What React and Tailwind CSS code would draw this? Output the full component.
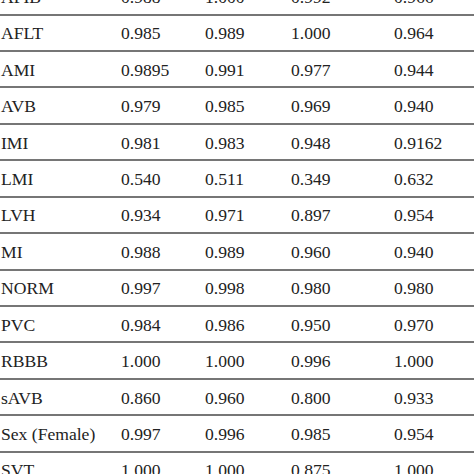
import React from "react";

const rows = [
  ["AFIB", "0.988", "1.000", "0.992", "0.966"],
  ["AFLT", "0.985", "0.989", "1.000", "0.964"],
  ["AMI", "0.9895", "0.991", "0.977", "0.944"],
  ["AVB", "0.979", "0.985", "0.969", "0.940"],
  ["IMI", "0.981", "0.983", "0.948", "0.9162"],
  ["LMI", "0.540", "0.511", "0.349", "0.632"],
  ["LVH", "0.934", "0.971", "0.897", "0.954"],
  ["MI", "0.988", "0.989", "0.960", "0.940"],
  ["NORM", "0.997", "0.998", "0.980", "0.980"],
  ["PVC", "0.984", "0.986", "0.950", "0.970"],
  ["RBBB", "1.000", "1.000", "0.996", "1.000"],
  ["sAVB", "0.860", "0.960", "0.800", "0.933"],
  ["Sex (Female)", "0.997", "0.996", "0.985", "0.954"],
  ["SVT", "1.000", "1.000", "0.875", "1.000"],
];

export default function App() {
  return (
    <div
      className="w-[474px] h-[474px] overflow-hidden bg-white text-[#222]"
      style={{ fontFamily: '"Liberation Serif", "Times New Roman", serif' }}
    >
      <div className="mt-[-20.95px]">
        {rows.map((r, i) => (
          <div
            key={i}
            className="grid grid-cols-[121px_84px_86px_103px_1fr] items-center h-[36.45px] border-b-2 border-[#767676] pt-[2px] text-[17.6px] leading-[17px]"
          >
            {r.map((c, j) => (
              <div key={j} className={j === 0 ? "pl-px whitespace-nowrap" : "whitespace-nowrap"}>
                {c}
              </div>
            ))}
          </div>
        ))}
      </div>
    </div>
  );
}
